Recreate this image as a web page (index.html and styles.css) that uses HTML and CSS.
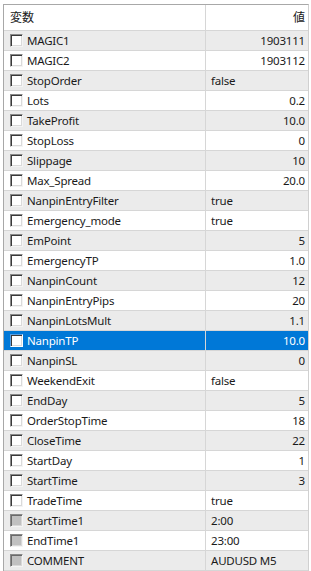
FILE: index.html
```html
<!DOCTYPE html>
<html>
<head>
<meta charset="utf-8">
<link rel="stylesheet" href="styles.css">
</head>
<body>
<div class="grid">
  <div class="row head">
    <div class="c name"><span class="hname">変数</span></div>
    <div class="c val right">値</div>
  </div>
  <div class="row alt"><div class="c name"><span class="cb"></span>MAGIC1</div><div class="c val right">1903111</div></div>
  <div class="row"><div class="c name"><span class="cb"></span>MAGIC2</div><div class="c val right">1903112</div></div>
  <div class="row alt"><div class="c name"><span class="cb"></span>StopOrder</div><div class="c val">false</div></div>
  <div class="row"><div class="c name"><span class="cb"></span>Lots</div><div class="c val right">0.2</div></div>
  <div class="row alt"><div class="c name"><span class="cb"></span>TakeProfit</div><div class="c val right">10.0</div></div>
  <div class="row"><div class="c name"><span class="cb"></span>StopLoss</div><div class="c val right">0</div></div>
  <div class="row alt"><div class="c name"><span class="cb"></span>Slippage</div><div class="c val right">10</div></div>
  <div class="row"><div class="c name"><span class="cb"></span>Max_Spread</div><div class="c val right">20.0</div></div>
  <div class="row alt"><div class="c name"><span class="cb"></span>NanpinEntryFilter</div><div class="c val">true</div></div>
  <div class="row"><div class="c name"><span class="cb"></span>Emergency_mode</div><div class="c val">true</div></div>
  <div class="row alt"><div class="c name"><span class="cb"></span>EmPoint</div><div class="c val right">5</div></div>
  <div class="row"><div class="c name"><span class="cb"></span>EmergencyTP</div><div class="c val right">1.0</div></div>
  <div class="row alt"><div class="c name"><span class="cb"></span>NanpinCount</div><div class="c val right">12</div></div>
  <div class="row"><div class="c name"><span class="cb"></span>NanpinEntryPips</div><div class="c val right">20</div></div>
  <div class="row alt"><div class="c name"><span class="cb"></span>NanpinLotsMult</div><div class="c val right">1.1</div></div>
  <div class="row sel"><div class="c name"><span class="cb"></span>NanpinTP</div><div class="c val right">10.0</div></div>
  <div class="row alt"><div class="c name"><span class="cb"></span>NanpinSL</div><div class="c val right">0</div></div>
  <div class="row"><div class="c name"><span class="cb"></span>WeekendExit</div><div class="c val">false</div></div>
  <div class="row alt"><div class="c name"><span class="cb"></span>EndDay</div><div class="c val right">5</div></div>
  <div class="row"><div class="c name"><span class="cb"></span>OrderStopTime</div><div class="c val right">18</div></div>
  <div class="row alt"><div class="c name"><span class="cb"></span>CloseTime</div><div class="c val right">22</div></div>
  <div class="row"><div class="c name"><span class="cb"></span>StartDay</div><div class="c val right">1</div></div>
  <div class="row alt"><div class="c name"><span class="cb"></span>StartTime</div><div class="c val right">3</div></div>
  <div class="row"><div class="c name"><span class="cb"></span>TradeTime</div><div class="c val">true</div></div>
  <div class="row alt"><div class="c name"><span class="cb dis"></span>StartTime1</div><div class="c val">2:00</div></div>
  <div class="row"><div class="c name"><span class="cb dis"></span>EndTime1</div><div class="c val">23:00</div></div>
  <div class="row alt"><div class="c name"><span class="cb dis"></span>COMMENT</div><div class="c val">AUDUSD M5</div></div>
</div>
</body>
</html>
```
FILE: styles.css
```css
html, body {
  margin: 0;
  padding: 0;
  background: #ffffff;
}
body {
  padding: 4px 0 0 3px;
  font-family: "Noto Sans", "Noto Sans CJK JP", sans-serif;
  font-size: 11.5px;
  letter-spacing: -0.2px;
  color: #1a1a1a;
}
.grid {
  width: 304px;
  border-top: 1px solid #a8a8a8;
  border-left: 1px solid #a8a8a8;
  border-right: 1px solid #d0d0d0;
}
.row {
  display: grid;
  grid-template-columns: 202px 1fr;
  height: 19px;
  border-bottom: 1px solid #d6d6d6;
  background: #ffffff;
}
.row.alt {
  background: #ebebeb;
}
.row.head {
  height: 25px;
  background: #ffffff;
  border-bottom: 1px solid #d6d6d6;
}
.row.sel {
  background: #0078d7;
  color: #ffffff;
}
.c {
  display: flex;
  align-items: center;
  white-space: nowrap;
  overflow: hidden;
  line-height: 19px;
}
.name {
  padding-left: 6px;
  border-right: 1px solid #d6d6d6;
}
.val {
  padding: 0 3px 0 5px;
}
.right {
  justify-content: flex-end;
}
.head .c {
  line-height: 25px;
  font-size: 12px;
  letter-spacing: 0;
}
.cb {
  width: 11px;
  height: 11px;
  border-style: solid;
  border-width: 1px;
  border-color: #8a8a8a #f4f4f4 #f4f4f4 #8a8a8a;
  box-shadow: inset 1px 1px 0 #3a3a3a, inset -1px -1px 0 #dadada;
  background: #ffffff;
  margin-right: 4px;
  flex: none;
}
.cb.dis {
  background: #c0c0c0;
  box-shadow: inset 1px 1px 0 #6a6a6a, inset -1px -1px 0 #d8d8d8;
}
.sel .cb {
  border-color: #5a9ee0 #ffffff #ffffff #5a9ee0;
}
```
